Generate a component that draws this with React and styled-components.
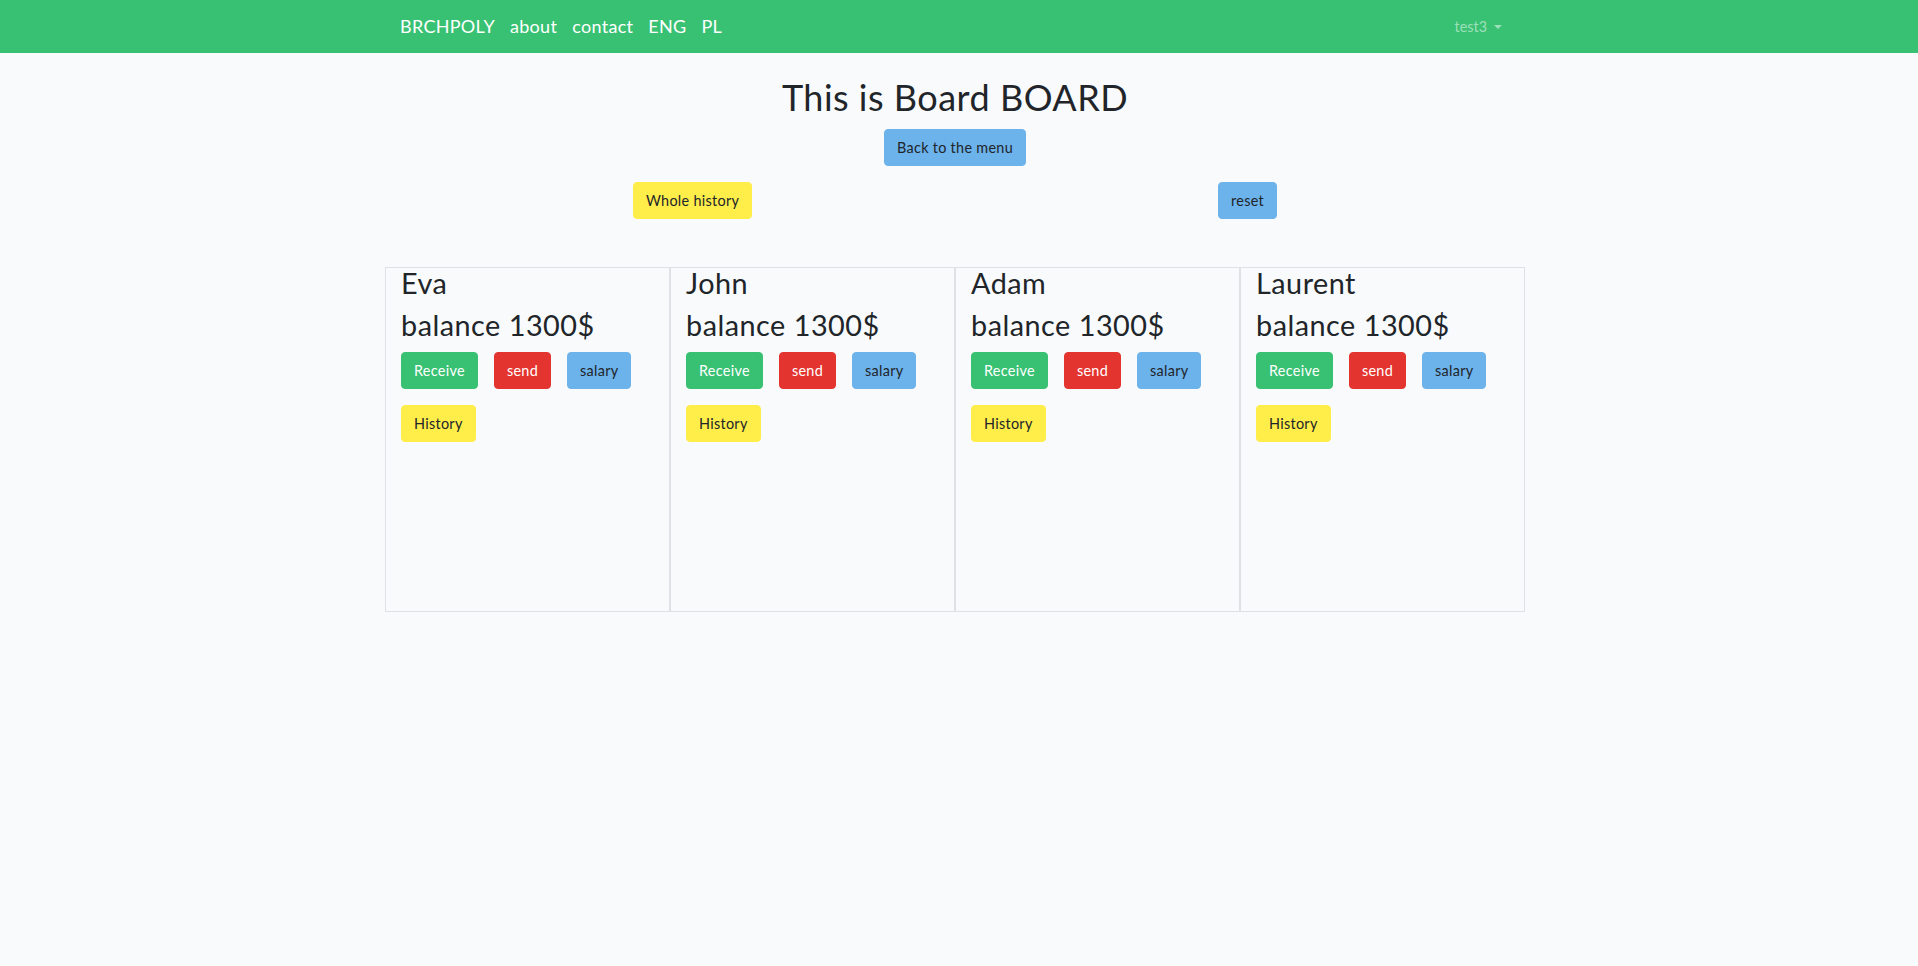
import React from "react";
import styled, { createGlobalStyle, css } from "styled-components";

const GlobalStyle = createGlobalStyle`
  html, body { margin: 0; padding: 0; }
  body {
    background: #f8fafc;
    color: #212529;
    font-family: Lato, "Noto Sans", sans-serif;
    font-size: 14.4px;
  }
  * { box-sizing: border-box; }
`;

const Navbar = styled.nav`
  background: #38c172;
  height: 53px;
  display: flex;
  align-items: center;
`;

const NavInner = styled.div`
  width: 1110px;
  margin-left: calc(50% - 559px);
  display: flex;
  align-items: center;
`;

const Brand = styled.a`
  color: #fff;
  font-size: 18px;
  line-height: 29px;
  letter-spacing: 0.3px;
  margin-right: 15px;
  text-decoration: none;
  cursor: pointer;
`;

const UserMenu = styled.a`
  margin-left: auto;
  margin-right: 8px;
  color: rgba(255, 255, 255, 0.5);
  font-size: 14.4px;
  line-height: 23px;
  display: flex;
  align-items: center;
  gap: 7px;
  cursor: pointer;
`;

const Caret = styled.span`
  width: 0;
  height: 0;
  border-top: 4.5px solid rgba(255, 255, 255, 0.5);
  border-left: 4.5px solid transparent;
  border-right: 4.5px solid transparent;
`;

const Container = styled.main`
  width: 1140px;
  margin-left: calc(50% - 574px);
`;

const Content = styled.div`
  padding: 0 15px;
`;

const Title = styled.h1`
  margin: 23px 0 10px;
  text-align: center;
  font-size: 36px;
  line-height: 43px;
  letter-spacing: 0.5px;
  font-weight: 400;
`;

const Center = styled.div`
  display: flex;
  justify-content: center;
`;

const TopActions = styled.div`
  display: flex;
  justify-content: space-around;
  margin-top: 16px;
`;

const variants = {
  success: css`background: #38c172; border-color: #38c172; color: #fff;`,
  danger: css`background: #e3342f; border-color: #e3342f; color: #fff;`,
  info: css`background: #6cb2eb; border-color: #6cb2eb; color: #212529;`,
  warning: css`background: #ffed4a; border-color: #ffed4a; color: #212529;`,
};

const Button = styled.button`
  height: 37px;
  padding: 0 12px;
  border: 1px solid transparent;
  border-radius: 4px;
  font-family: inherit;
  font-size: 14.4px;
  line-height: 23px;
  letter-spacing: 0.3px;
  cursor: pointer;
  ${(p) => variants[p.$variant]}
`;

const Board = styled.div`
  display: grid;
  grid-template-columns: repeat(4, 285px);
  margin-top: 48px;
`;

const PlayerCol = styled.section`
  height: 345px;
  border: 1px solid #dee2e6;
  padding: 0 15px;
`;

const Heading = styled.h2`
  margin: 0 0 11px;
  font-size: 28.8px;
  line-height: 31px;
  letter-spacing: 0.5px;
  font-weight: 400;
`;

const Actions = styled.div`
  display: flex;
  flex-wrap: wrap;
  gap: 16px;
`;

const players = ["Eva", "John", "Adam", "Laurent"];

export default function App() {
  return (
    <>
      <GlobalStyle />
      <Navbar>
        <NavInner>
          <Brand>BRCHPOLY</Brand>
          <Brand>about</Brand>
          <Brand>contact</Brand>
          <Brand>ENG</Brand>
          <Brand>PL</Brand>
          <UserMenu>
            test3 <Caret />
          </UserMenu>
        </NavInner>
      </Navbar>
      <Container>
        <Content>
          <Title>This is Board BOARD</Title>
          <Center>
            <Button $variant="info">Back to the menu</Button>
          </Center>
          <TopActions>
            <Button $variant="warning">Whole history</Button>
            <Button $variant="info">reset</Button>
          </TopActions>
        </Content>
        <Board>
          {players.map((name) => (
            <PlayerCol key={name}>
              <Heading>{name}</Heading>
              <Heading>balance 1300$</Heading>
              <Actions>
                <Button $variant="success">Receive</Button>
                <Button $variant="danger">send</Button>
                <Button $variant="info">salary</Button>
                <Button $variant="warning">History</Button>
              </Actions>
            </PlayerCol>
          ))}
        </Board>
      </Container>
    </>
  );
}
